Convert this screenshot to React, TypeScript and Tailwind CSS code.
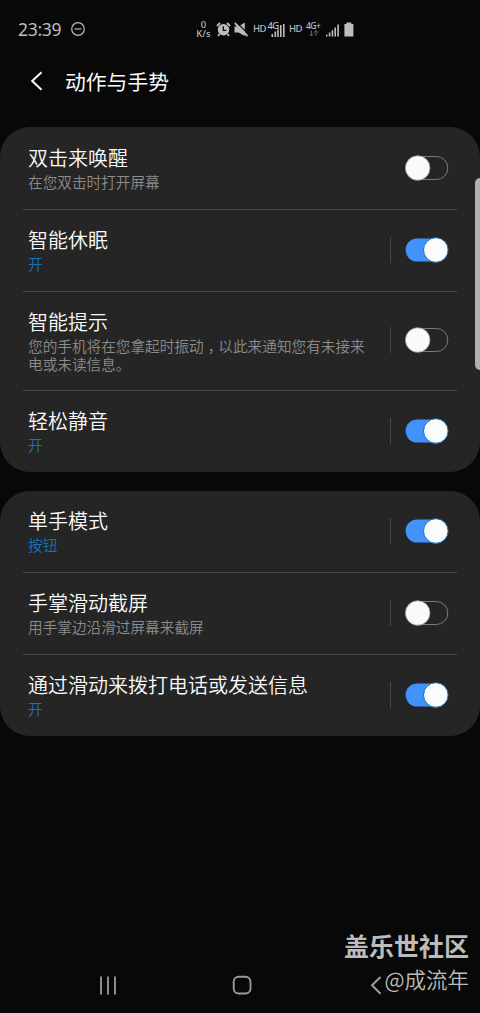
import React from "react";

interface SettingItem {
  title: string;
  summary: React.ReactNode;
  active?: boolean;
  hasDivider?: boolean;
  enabled: boolean;
}

const motionSettings: SettingItem[] = [
  { title: "双击来唤醒", summary: "在您双击时打开屏幕", enabled: false },
  { title: "智能休眠", summary: "开", active: true, hasDivider: true, enabled: true },
  {
    title: "智能提示",
    summary: (
      <>
        您的手机将在您拿起时振动<span className="relative left-1">，</span>以此来通知您有未接来
        <br />
        电或未读信息。
      </>
    ),
    hasDivider: true,
    enabled: false,
  },
  { title: "轻松静音", summary: "开", active: true, hasDivider: true, enabled: true },
];

const gestureSettings: SettingItem[] = [
  { title: "单手模式", summary: "按钮", active: true, hasDivider: true, enabled: true },
  { title: "手掌滑动截屏", summary: "用手掌边沿滑过屏幕来截屏", hasDivider: true, enabled: false },
  { title: "通过滑动来拨打电话或发送信息", summary: "开", active: true, hasDivider: true, enabled: true },
];

const Toggle: React.FC<{ enabled: boolean }> = ({ enabled }) => (
  <svg width="46" height="28" viewBox="0 0 46 28" className="shrink-0" role="switch" aria-checked={enabled}>
    {enabled ? (
      <>
        <rect x="1.6" y="2.5" width="42" height="23" rx="11.5" fill="#4192fb" />
        <circle cx="31.8" cy="14" r="12.3" fill="#fafcfc" stroke="#1870b4" strokeWidth="1" />
      </>
    ) : (
      <>
        <rect x="1.8" y="2.5" width="42" height="23" rx="11.5" fill="none" stroke="#7b7b7b" />
        <circle cx="13.7" cy="14" r="12.3" fill="#fafafa" stroke="#949494" strokeWidth="0.8" />
      </>
    )}
  </svg>
);

const SettingRow: React.FC<{ item: SettingItem }> = ({ item }) => (
  <li className="mx-[23px] flex min-h-[82px] items-start border-b border-[#474747] pl-[5px] last:min-h-[81px] last:border-b-0">
    <div className="flex-1 pt-4 pb-[17px]">
      <h2 className="text-[20px] leading-7 font-[350] whitespace-nowrap text-[#fafafa]">{item.title}</h2>
      <p
        className={`mt-px text-[14.65px] leading-[18px] font-[350] whitespace-nowrap ${
          item.active ? "text-[#1872ba]" : "text-[#8c8c8c]"
        }`}
      >
        {item.summary}
      </p>
    </div>
    <div className="mr-[7px] flex items-center gap-[13px] self-center pb-[2px]">
      {item.hasDivider && <span className="h-[26px] w-px bg-[#484848]" />}
      <Toggle enabled={item.enabled} />
    </div>
  </li>
);

const SettingCard: React.FC<{ items: SettingItem[]; className?: string }> = ({ items, className = "" }) => (
  <ul className={`rounded-[30px] bg-[#252525] ${className}`}>
    {items.map((item) => (
      <SettingRow key={item.title} item={item} />
    ))}
  </ul>
);

const StatusBar = () => (
  <header className="flex h-[58px] items-center pl-[18px] font-['Noto_Sans',sans-serif] text-[#bdbdbd]">
    <span className="w-[53px] text-[17.5px] leading-5 tracking-[-0.3px]">23:39</span>
    <svg width="14" height="14" viewBox="0 0 14 14" fill="none" stroke="currentColor" strokeWidth="1.2">
      <circle cx="7" cy="7" r="6.3" />
      <path d="M3.5 7h7" />
    </svg>
    <div className="ml-[111px] flex w-[15px] flex-col items-center text-[9.5px] leading-[9px] font-medium">
      <span>0</span>
      <span>K/s</span>
    </div>
    {/* alarm */}
    <svg className="ml-[5px]" width="15" height="15" viewBox="0 0 15 15">
      <circle cx="7.5" cy="7.7" r="5.7" fill="currentColor" />
      <path d="M1 4L4 1M14 4l-3-3M3.5 12L2 14M11.5 12l1.5 2" stroke="currentColor" strokeWidth="1.8" />
      <path d="M7.3 4.3v4h3" fill="none" stroke="#080808" strokeWidth="1.3" />
    </svg>
    {/* muted speaker */}
    <svg className="ml-[3px]" width="15" height="15" viewBox="0 0 15 15">
      <path d="M0.5 4.5h4L10.8 0.5v13.5L4.5 10.5h-4z" fill="currentColor" />
      <path d="M2.6 0.5l13 13" stroke="#080808" strokeWidth="1.2" />
      <path d="M0.8 1l12.7 13" stroke="currentColor" strokeWidth="1.8" />
    </svg>
    <span className="ml-1 w-[14px] text-[9.5px] leading-3 font-medium tracking-[-0.6px]">HD</span>
    <svg className="ml-px overflow-visible" width="18" height="18" viewBox="0 0 18 18" fill="currentColor">
      <text x="-0.5" y="8.5" fontSize="9.5" fontWeight="500" letterSpacing="-0.8">4G</text>
      <path d="M3.5 14h1.6v3H3.5zM6.5 11.5h1.6V17H6.5zM9.2 9.5h1.6V17H9.2zM12 5h1.6v12H12zM15 4h1.6v13H15z" />
    </svg>
    <span className="ml-[3px] w-[15px] text-[9.5px] leading-3 font-medium tracking-[-0.6px]">HD</span>
    <svg className="ml-[2px] overflow-visible" width="17" height="18" viewBox="0 0 17 18">
      <text x="0" y="8.5" fontSize="8.5" fontWeight="500" letterSpacing="-0.5" fill="currentColor">4G+</text>
      <path d="M5.4 10.5v5.5M3.2 13.8l2.2 2.2 2.2-2.2M10 16v-5.5M7.9 12.7l2.1-2.2 2.1 2.2" fill="none" stroke="#6b6b6b" />
    </svg>
    <svg className="ml-[3px]" width="14" height="15" viewBox="0 0 14 15" fill="currentColor">
      <path d="M0 12.5h1.5V14.5H0zM2.8 10.5h1.6v4H2.8zM5.6 8.2h1.6v6.3H5.6zM8.4 5.5H10v9H8.4zM11.3 2.5h1.6v12h-1.6z" />
    </svg>
    <svg className="ml-[4px]" width="10" height="15" viewBox="0 0 10 15" fill="currentColor">
      <path d="M2.5 0.5h4.8v1.6H9.4V14.5H0.4V2.1h2.1z" />
    </svg>
  </header>
);

const NavigationBar = () => (
  <nav className="flex h-[56px] items-center pl-[99px] text-[#9b9b9b]">
    <svg width="18" height="19" viewBox="0 0 18 19" fill="none" stroke="currentColor" strokeWidth="1.8">
      <path d="M2 0.5v18M9 0.5v18M16 0.5v18" />
    </svg>
    <svg className="ml-[115px]" width="20" height="20" viewBox="0 0 20 20" fill="none" stroke="currentColor" strokeWidth="1.9">
      <rect x="1.7" y="1.7" width="16.8" height="16.8" rx="5" />
    </svg>
    <svg className="ml-[118px]" width="12" height="19" viewBox="0 0 12 19" fill="none" stroke="currentColor" strokeWidth="2">
      <path d="M10.5 1L2 9.3l8.5 8.5" />
    </svg>
  </nav>
);

const App = () => {
  return (
    <div className="relative flex h-[1013px] w-[480px] flex-col overflow-hidden bg-[#080808] font-['Noto_Sans_CJK_SC',sans-serif]">
      <StatusBar />
      <div className="flex h-[69px] items-start pt-2 pl-[30px]">
        <svg className="mt-[5px]" width="13" height="20" viewBox="0 0 13 20" fill="none" stroke="#fafafa" strokeWidth="2">
          <path d="M11.5 1.2L2.2 10l9.3 8.8" />
        </svg>
        <h1 className="ml-[22px] text-[20.8px] leading-[30px] text-[#fafafa]">动作与手势</h1>
      </div>
      <main className="flex flex-1 flex-col gap-[19px]">
        <SettingCard items={motionSettings} className="pt-px" />
        <SettingCard items={gestureSettings} />
      </main>
      <NavigationBar />

      {/* edge panel handle */}
      <div className="absolute top-[178px] right-0 h-[192px] w-[5px] rounded-l-[5px] bg-[#b5b0ab]" />
      {/* watermark */}
      <div className="absolute right-[11px] bottom-[18px] text-right whitespace-nowrap text-[#bcbcbc]">
        <p className="text-[25px] leading-[33px] font-bold">盖乐世社区</p>
        <p className="text-[21.5px] leading-[33px] font-[350]">@成流年</p>
      </div>
    </div>
  );
};

export default App;
